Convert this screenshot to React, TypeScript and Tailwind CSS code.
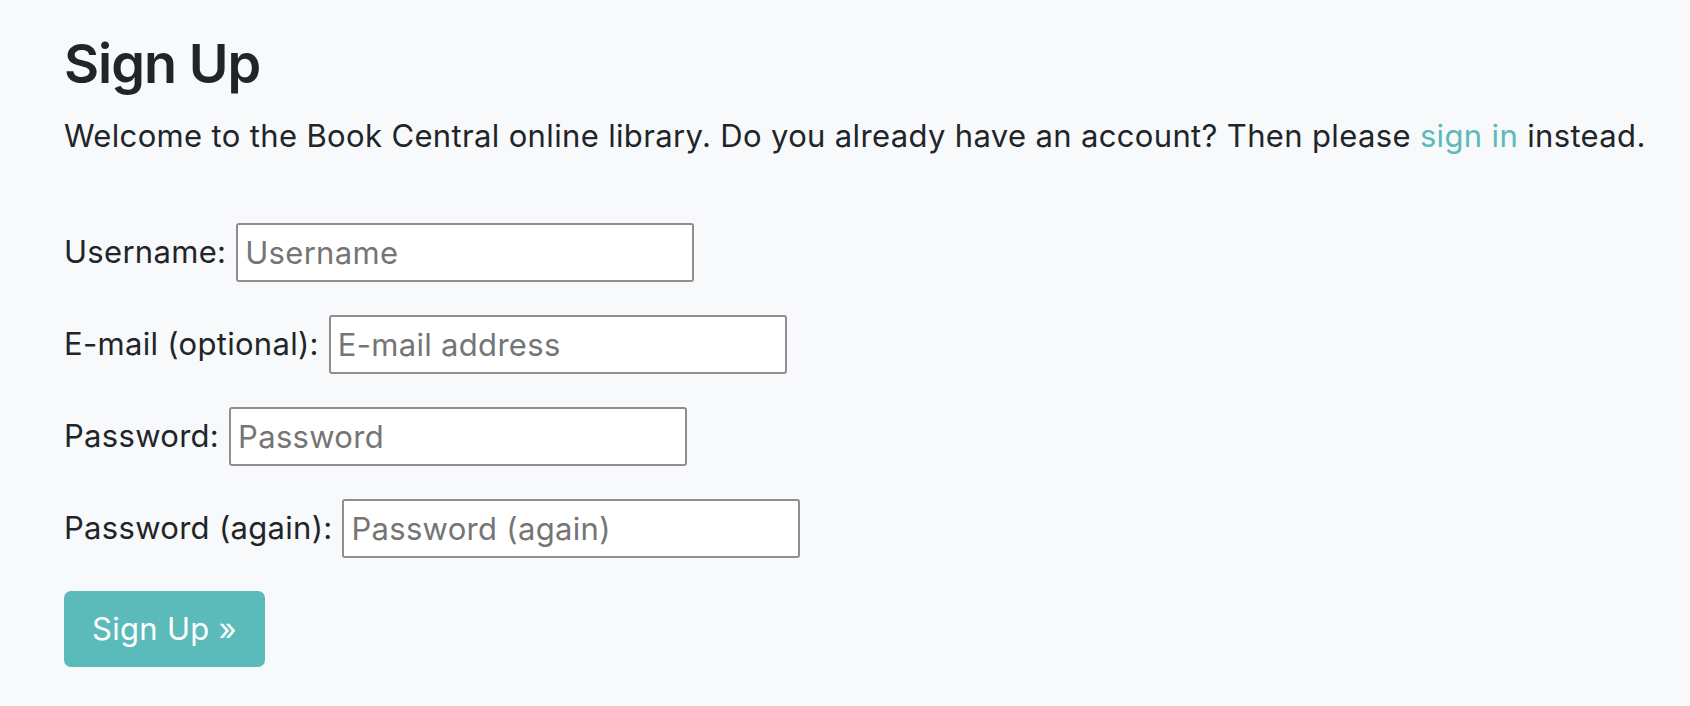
import React from "react";

const fields = [
  { label: "Username:", placeholder: "Username", type: "text" },
  { label: "E-mail (optional):", placeholder: "E-mail address", type: "email" },
  { label: "Password:", placeholder: "Password", type: "password" },
  { label: "Password (again):", placeholder: "Password (again)", type: "password" },
];

export default function App() {
  return (
    <main
      className="min-h-screen bg-[#f8f9fa] pl-[64px] pr-[24px] pt-[31px] text-[#212529]"
      style={{ fontFamily: "Inter, 'Liberation Sans', sans-serif" }}
    >
      <h1 className="text-[54px] font-semibold leading-[66px] tracking-[-1px]">Sign Up</h1>
      <p className="mt-[18px] text-[31px] leading-[42px] tracking-[0.35px]">
        Welcome to the Book Central online library. Do you already have an account? Then please{" "}
        <a href="#" className="text-[#5bbaba]">
          sign in
        </a>{" "}
        instead.
      </p>
      <form className="mt-[66px] flex flex-col items-start gap-[33px]">
        {fields.map((f) => (
          <div key={f.label} className="flex items-center gap-[10px] text-[31px] tracking-[0.3px]">
            <label>{f.label}</label>
            <input
              type={f.type}
              placeholder={f.placeholder}
              className="h-[59px] w-[458px] rounded-[3px] border-2 border-[#8e8e93] bg-white px-[7px] text-[31px] tracking-[0.3px] outline-none placeholder:text-[#757575]"
            />
          </div>
        ))}
        <button
          type="submit"
          className="h-[76px] w-[201px] rounded-[7px] bg-[#5bbaba] text-[31px] tracking-[0.3px] text-white"
        >
          Sign Up »
        </button>
      </form>
    </main>
  );
}
